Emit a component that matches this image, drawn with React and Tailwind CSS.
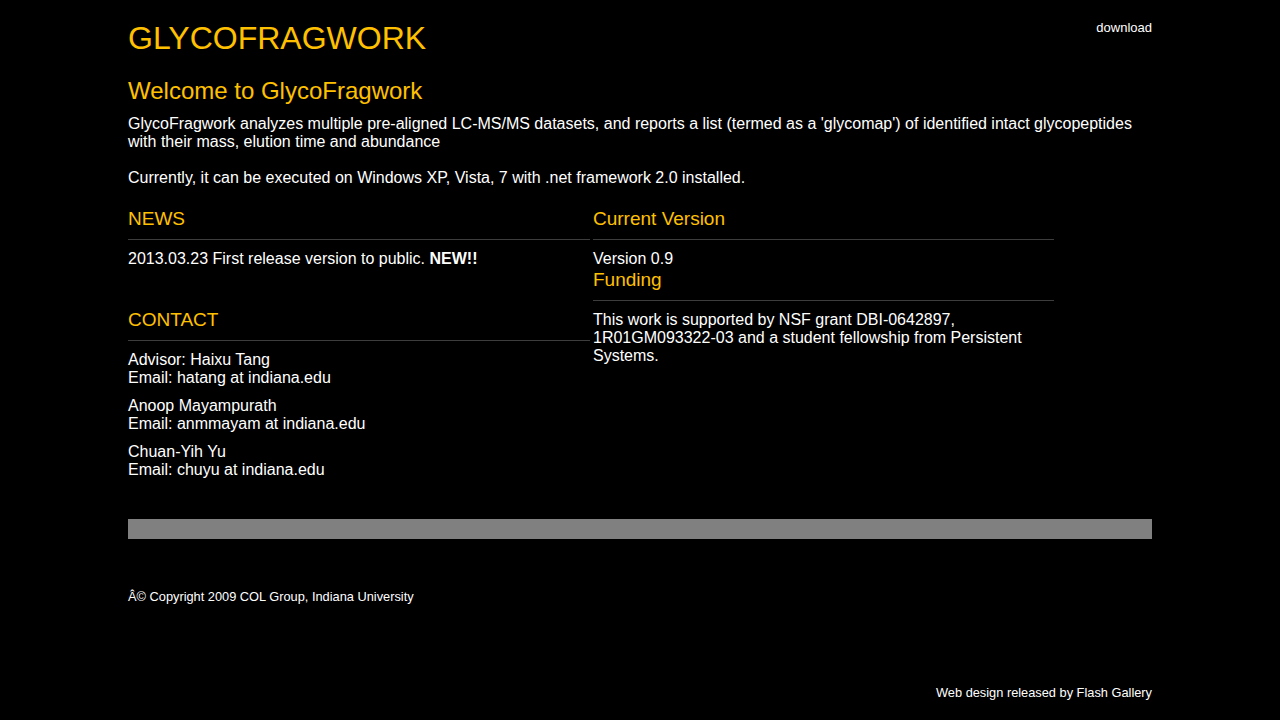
import React from "react";

const contacts = [
  { name: "Advisor: Haixu Tang", email: "Email: hatang at indiana.edu" },
  { name: "Anoop Mayampurath", email: "Email: anmmayam at indiana.edu" },
  { name: "Chuan-Yih Yu", email: "Email: chuyu at indiana.edu" },
];

const Heading = ({ children, className = "" }) => (
  <h3 className={`text-[19px] leading-[22px] text-[#ffc000] font-normal ${className}`}>{children}</h3>
);

const Rule = () => <div className="mt-[9px] h-px bg-[#3d3d3d]" />;

export default function App() {
  return (
    <div className="min-h-screen w-full bg-black text-white font-['Liberation_Sans',Arial,sans-serif]">
      <div className="w-[1024px] mx-auto">
        {/* header */}
        <div className="flex justify-between items-start pt-[20px]">
          <h1 className="text-[32px] leading-[36px] text-[#ffc000] font-normal">GLYCOFRAGWORK</h1>
          <a className="mt-[1px] text-[13px] leading-[14px] text-white">download</a>
        </div>

        <h2 className="mt-[21px] text-[24px] leading-[28px] text-[#ffc000] font-normal">
          Welcome to GlycoFragwork
        </h2>
        <p className="mt-[10px] text-[16px] leading-[18px]">
          GlycoFragwork analyzes multiple pre-aligned LC-MS/MS datasets, and reports a list (termed as a 'glycomap') of identified intact glycopeptides with their mass, elution time and abundance
        </p>
        <p className="mt-[18px] text-[16px] leading-[18px]">
          Currently, it can be executed on Windows XP, Vista, 7 with .net framework 2.0 installed.
        </p>

        {/* two columns */}
        <div className="mt-[21px] flex gap-[3px] text-[16px] leading-[18px]">
          <div className="w-[462px]">
            <Heading>NEWS</Heading>
            <Rule />
            <p className="mt-[10px]">
              2013.03.23 First release version to public. <b>NEW!!</b>
            </p>

            <Heading className="mt-[41px]">CONTACT</Heading>
            <Rule />
            {contacts.map((c, i) => (
              <p key={c.name} className="mt-[10px]">
                {c.name}
                <br />
                {c.email}
              </p>
            ))}
          </div>

          <div className="w-[461px]">
            <Heading>Current Version</Heading>
            <Rule />
            <p className="mt-[10px]">Version 0.9</p>
            <Heading className="mt-[1px]">Funding</Heading>
            <Rule />
            <p className="mt-[10px]">
              This work is supported by NSF grant DBI-0642897, 1R01GM093322-03 and a student fellowship from Persistent Systems.
            </p>
          </div>
        </div>

        <div className="mt-[40px] h-[20px] bg-[#808080]" />

        <p className="mt-[51px] text-[12.8px] leading-[14px]">Â© Copyright 2009 COL Group, Indiana University</p>
        <p className="mt-[82px] text-[12.8px] leading-[14px] text-right">Web design released by Flash Gallery</p>
      </div>
    </div>
  );
}
